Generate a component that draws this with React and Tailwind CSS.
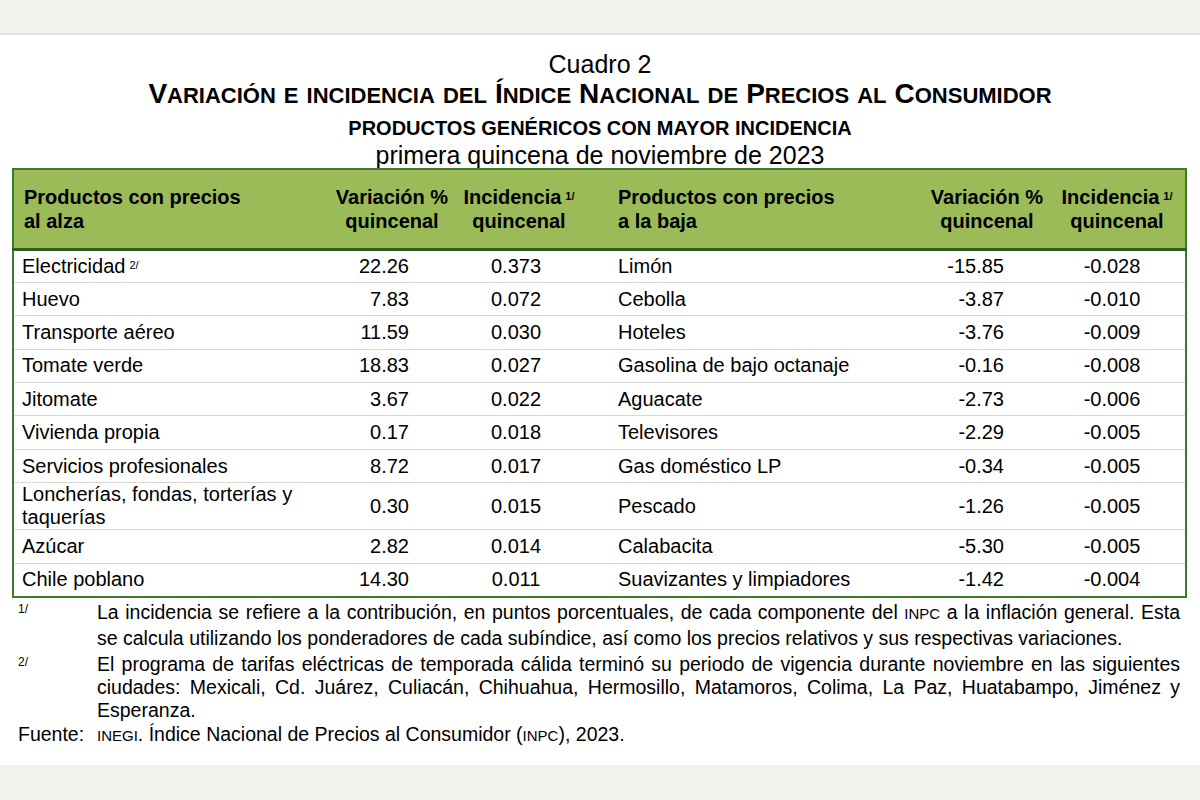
import React from 'react';

const up = [
  ['Electricidad', '22.26', '0.373', true],
  ['Huevo', '7.83', '0.072'],
  ['Transporte aéreo', '11.59', '0.030'],
  ['Tomate verde', '18.83', '0.027'],
  ['Jitomate', '3.67', '0.022'],
  ['Vivienda propia', '0.17', '0.018'],
  ['Servicios profesionales', '8.72', '0.017'],
  ['Loncherías, fondas, torterías y taquerías', '0.30', '0.015'],
  ['Azúcar', '2.82', '0.014'],
  ['Chile poblano', '14.30', '0.011'],
];

const down = [
  ['Limón', '-15.85', '-0.028'],
  ['Cebolla', '-3.87', '-0.010'],
  ['Hoteles', '-3.76', '-0.009'],
  ['Gasolina de bajo octanaje', '-0.16', '-0.008'],
  ['Aguacate', '-2.73', '-0.006'],
  ['Televisores', '-2.29', '-0.005'],
  ['Gas doméstico LP', '-0.34', '-0.005'],
  ['Pescado', '-1.26', '-0.005'],
  ['Calabacita', '-5.30', '-0.005'],
  ['Suavizantes y limpiadores', '-1.42', '-0.004'],
];

// title words: [big initial, rest in small caps]
const titleWords = [
  ['V', 'ARIACIÓN'],
  ['', 'E'],
  ['', 'INCIDENCIA'],
  ['', 'DEL'],
  ['Í', 'NDICE'],
  ['N', 'ACIONAL'],
  ['', 'DE'],
  ['P', 'RECIOS'],
  ['', 'AL'],
  ['C', 'ONSUMIDOR'],
];

function Sup({ children, bold }) {
  return (
    <sup className={`text-[11px] relative -top-[4px] ml-[4px] ${bold ? 'font-bold' : 'font-normal'}`}>
      {children}
    </sup>
  );
}

export default function App() {
  return (
    <div className="w-[1200px] h-[800px] flex flex-col bg-white text-black font-['Liberation_Sans',Arial,sans-serif]">
      <div className="h-[35px] bg-[#f2f1ec] border-b-2 border-[#e4e4e2]" />

      <div className="flex-1 flex flex-col">
        <div className="flex flex-col items-center pt-[15px]">
          <div className="text-[25px] leading-[29px]">Cuadro 2</div>
          <div className="leading-[30px] font-bold flex gap-[8px] items-baseline">
            {titleWords.map(([b, s], i) => (
              <span key={i}>
                {b && <span className="text-[28px]">{b}</span>}
                <span className="text-[22px]">{s}</span>
              </span>
            ))}
          </div>
          <div className="text-[20px] leading-[30px] font-bold">PRODUCTOS GENÉRICOS CON MAYOR INCIDENCIA</div>
          <div className="text-[25px] leading-[25px]">primera quincena de noviembre de 2023</div>
        </div>

        <div className="px-[12px]">
          <table className="w-[1173px] table-fixed border-collapse border-2 border-[#3e7a2b] text-[20px]">
            <colgroup>
              <col className="w-[318px]" />
              <col className="w-[122px]" />
              <col className="w-[132px]" />
              <col className="w-[328px]" />
              <col className="w-[148px]" />
              <col className="w-[125px]" />
            </colgroup>
            <thead>
              <tr className="bg-[#9bbb59] h-[80px] border-b-[3px] border-[#2e5e1e] font-bold leading-[24px]">
                <th className="text-left font-bold pl-[10px] align-middle">Productos con precios<br />al alza</th>
                <th className="text-center font-bold whitespace-nowrap">Variación %<br />quincenal</th>
                <th className="text-center font-bold whitespace-nowrap">Incidencia<Sup bold>1/</Sup><br />quincenal</th>
                <th className="text-left font-bold pl-[33px]">Productos con precios<br />a la baja</th>
                <th className="text-center font-bold whitespace-nowrap">Variación %<br />quincenal</th>
                <th className="text-center font-bold whitespace-nowrap pr-[12px]">Incidencia<Sup bold>1/</Sup><br />quincenal</th>
              </tr>
            </thead>
            <tbody>
              {up.map((r, i) => {
                const d = down[i];
                const tall = i === 7;
                return (
                  <tr key={r[0]} className={`${tall ? 'h-[47px]' : 'h-[33.4px]'} ${i < 9 ? 'border-b border-[#d8d8d8]' : ''} leading-[23px]`}>
                    <td className="pl-[8px] pr-[16px]">
                      {r[0]}
                      {r[3] && <Sup>2/</Sup>}
                    </td>
                    <td className="text-right pr-[44px]">{r[1]}</td>
                    <td className="text-center pr-[6px] pl-0">{r[2]}</td>
                    <td className="pl-[33px]">{d[0]}</td>
                    <td className="text-right pr-[57px]">{d[1]}</td>
                    <td className="text-center pr-[22px]">{d[2]}</td>
                  </tr>
                );
              })}
            </tbody>
          </table>
        </div>

        <div className="grid grid-cols-[79px_1fr] pl-[18px] pr-[20px] pt-[2px] text-[19.5px] leading-[25px]">
          <div className="text-[12px] leading-[18px]">1/</div>
          <div className="text-justify">
            La incidencia se refiere a la contribución, en puntos porcentuales, de cada componente del <span className="text-[15px]">INPC</span> a la inflación general. Esta se calcula utilizando los ponderadores de cada subíndice, así como los precios relativos y sus respectivas variaciones.
          </div>
          <div className="text-[12px] leading-[18px] pt-[2px]">2/</div>
          <div className="text-justify leading-[23px] pt-[2px]">
            El programa de tarifas eléctricas de temporada cálida terminó su periodo de vigencia durante noviembre en las siguientes ciudades: Mexicali, Cd. Juárez, Culiacán, Chihuahua, Hermosillo, Matamoros, Colima, La Paz, Huatabampo, Jiménez y Esperanza.
          </div>
          <div>Fuente:</div>
          <div>
            <span className="text-[15px]">INEGI</span>. Índice Nacional de Precios al Consumidor (<span className="text-[15px]">INPC</span>), 2023.
          </div>
        </div>
      </div>

      <div className="h-[35px] bg-[#f2f1ec]" />
    </div>
  );
}
